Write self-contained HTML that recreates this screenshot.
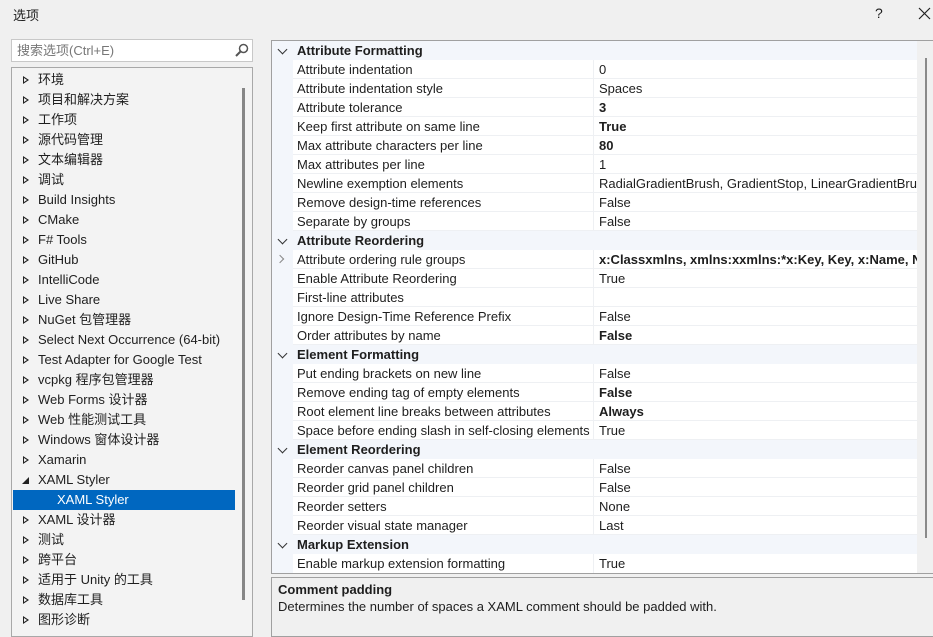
<!DOCTYPE html>
<html><head><meta charset="utf-8"><style>
*{margin:0;padding:0;box-sizing:border-box}
body{width:933px;height:626px;overflow:hidden;background:#f0f0f0;font-family:"Liberation Sans","Noto Sans CJK SC",sans-serif;font-size:13px;color:#1e1e1e;position:relative}
.abs{position:absolute}
.title{left:13px;top:5px;font-size:13px}
.search{left:11px;top:39px;width:242px;height:23px;border:1px solid #c8c8c8;background:#fff;color:#777;padding:2px 5px;line-height:17px}
.tree{left:11px;top:67px;width:242px;height:570px;border:1px solid #a8a8a8;background:#f3f3f3}
.ti{position:absolute;left:1px;width:222px;height:20px;line-height:20px;white-space:nowrap}
.ti .t{position:absolute;left:25px}
.ti .a{position:absolute;left:10px;top:6px;width:0;height:0;border-left:6px solid #222;border-top:4px solid transparent;border-bottom:4px solid transparent}
.ti .a::after{content:"";position:absolute;left:-5px;top:-2px;border-left:3px solid #f3f3f3;border-top:2px solid transparent;border-bottom:2px solid transparent}
.sel{background:#0067c0;color:#fff}
.grid{left:271px;top:40px;width:662px;height:534px;border:1px solid #a0a0a0;border-right:none;background:#fff;overflow:hidden}
.r{position:absolute;left:0;width:645px;height:19px;line-height:19px;white-space:nowrap}
.r.h{background:#f3f6fb;font-weight:bold}
.r .g{position:absolute;left:0;top:0;width:21px;height:19px;background:#f3f6fb}
.r .n{position:absolute;left:25px}
.r .v{position:absolute;left:321px;top:0;height:19px;border-left:1px solid #eef0f3;padding-left:5px;width:330px;overflow:hidden}
.r.d{border-bottom:1px solid #eef0f3}
.b{font-weight:bold}
.chev{position:absolute;left:7px;top:5px;width:7px;height:7px;border-right:1.5px solid #333;border-bottom:1.5px solid #333;transform:rotate(45deg)}
.chr{position:absolute;left:5px;top:6px;width:6px;height:6px;border-right:1.3px solid #888;border-top:1.3px solid #888;transform:rotate(45deg)}
.sb{left:917px;top:41px;width:16px;height:532px;background:#f0f0f0}
.desc{left:271px;top:577px;width:662px;height:60px;border:1px solid #a0a0a0;border-right:none;background:#f0f0f0;padding:4px 6px}
</style></head><body>
<div class="abs title">选项</div>
<div class="abs" style="left:875px;top:5px;font-size:14px">?</div>
<svg class="abs" style="left:918px;top:7px" width="13" height="13"><path d="M1 1L12 12M12 1L1 12" stroke="#222" stroke-width="1.2"/></svg>
<div class="abs search">搜索选项(Ctrl+E)<svg style="position:absolute;right:3px;top:3px" width="14" height="14"><circle cx="8.5" cy="5.5" r="4" fill="none" stroke="#555" stroke-width="1.5"/><path d="M5.5 8.5L1 13" stroke="#555" stroke-width="2"/></svg></div>
<div class="abs tree">
<div class="abs" style="left:230px;top:20px;width:3px;height:512px;background:#868686"></div>
<div class="ti" style="top:2px"><i class="a"></i><span class="t">环境</span></div>
<div class="ti" style="top:22px"><i class="a"></i><span class="t">项目和解决方案</span></div>
<div class="ti" style="top:42px"><i class="a"></i><span class="t">工作项</span></div>
<div class="ti" style="top:62px"><i class="a"></i><span class="t">源代码管理</span></div>
<div class="ti" style="top:82px"><i class="a"></i><span class="t">文本编辑器</span></div>
<div class="ti" style="top:102px"><i class="a"></i><span class="t">调试</span></div>
<div class="ti" style="top:122px"><i class="a"></i><span class="t">Build Insights</span></div>
<div class="ti" style="top:142px"><i class="a"></i><span class="t">CMake</span></div>
<div class="ti" style="top:162px"><i class="a"></i><span class="t">F# Tools</span></div>
<div class="ti" style="top:182px"><i class="a"></i><span class="t">GitHub</span></div>
<div class="ti" style="top:202px"><i class="a"></i><span class="t">IntelliCode</span></div>
<div class="ti" style="top:222px"><i class="a"></i><span class="t">Live Share</span></div>
<div class="ti" style="top:242px"><i class="a"></i><span class="t">NuGet 包管理器</span></div>
<div class="ti" style="top:262px"><i class="a"></i><span class="t">Select Next Occurrence (64-bit)</span></div>
<div class="ti" style="top:282px"><i class="a"></i><span class="t">Test Adapter for Google Test</span></div>
<div class="ti" style="top:302px"><i class="a"></i><span class="t">vcpkg 程序包管理器</span></div>
<div class="ti" style="top:322px"><i class="a"></i><span class="t">Web Forms 设计器</span></div>
<div class="ti" style="top:342px"><i class="a"></i><span class="t">Web 性能测试工具</span></div>
<div class="ti" style="top:362px"><i class="a"></i><span class="t">Windows 窗体设计器</span></div>
<div class="ti" style="top:382px"><i class="a"></i><span class="t">Xamarin</span></div>
<div class="ti" style="top:402px"><svg style="position:absolute;left:9px;top:7px" width="7" height="7"><path d="M7 0L7 7L0 7Z" fill="#222"/></svg><span class="t">XAML Styler</span></div>
<div class="ti sel" style="top:422px"><span class="t" style="left:44px">XAML Styler</span></div>
<div class="ti" style="top:442px"><i class="a"></i><span class="t">XAML 设计器</span></div>
<div class="ti" style="top:462px"><i class="a"></i><span class="t">测试</span></div>
<div class="ti" style="top:482px"><i class="a"></i><span class="t">跨平台</span></div>
<div class="ti" style="top:502px"><i class="a"></i><span class="t">适用于 Unity 的工具</span></div>
<div class="ti" style="top:522px"><i class="a"></i><span class="t">数据库工具</span></div>
<div class="ti" style="top:542px"><i class="a"></i><span class="t">图形诊断</span></div>
</div>
<div class="abs grid">
<div class="r h" style="top:0"><i class="chev"></i><span class="n">Attribute Formatting</span></div>
<div class="r d" style="top:19px"><i class="g"></i><span class="n">Attribute indentation</span><span class="v">0</span></div>
<div class="r d" style="top:38px"><i class="g"></i><span class="n">Attribute indentation style</span><span class="v">Spaces</span></div>
<div class="r d" style="top:57px"><i class="g"></i><span class="n">Attribute tolerance</span><span class="v b">3</span></div>
<div class="r d" style="top:76px"><i class="g"></i><span class="n">Keep first attribute on same line</span><span class="v b">True</span></div>
<div class="r d" style="top:95px"><i class="g"></i><span class="n">Max attribute characters per line</span><span class="v b">80</span></div>
<div class="r d" style="top:114px"><i class="g"></i><span class="n">Max attributes per line</span><span class="v">1</span></div>
<div class="r d" style="top:133px"><i class="g"></i><span class="n">Newline exemption elements</span><span class="v">RadialGradientBrush, GradientStop, LinearGradientBrush</span></div>
<div class="r d" style="top:152px"><i class="g"></i><span class="n">Remove design-time references</span><span class="v">False</span></div>
<div class="r d" style="top:171px"><i class="g"></i><span class="n">Separate by groups</span><span class="v">False</span></div>
<div class="r h" style="top:190px"><i class="chev"></i><span class="n">Attribute Reordering</span></div>
<div class="r d" style="top:209px"><i class="g"></i><i class="chr"></i><span class="n">Attribute ordering rule groups</span><span class="v b">x:Classxmlns, xmlns:xxmlns:*x:Key, Key, x:Name, Name</span></div>
<div class="r d" style="top:228px"><i class="g"></i><span class="n">Enable Attribute Reordering</span><span class="v">True</span></div>
<div class="r d" style="top:247px"><i class="g"></i><span class="n">First-line attributes</span><span class="v"></span></div>
<div class="r d" style="top:266px"><i class="g"></i><span class="n">Ignore Design-Time Reference Prefix</span><span class="v">False</span></div>
<div class="r d" style="top:285px"><i class="g"></i><span class="n">Order attributes by name</span><span class="v b">False</span></div>
<div class="r h" style="top:304px"><i class="chev"></i><span class="n">Element Formatting</span></div>
<div class="r d" style="top:323px"><i class="g"></i><span class="n">Put ending brackets on new line</span><span class="v">False</span></div>
<div class="r d" style="top:342px"><i class="g"></i><span class="n">Remove ending tag of empty elements</span><span class="v b">False</span></div>
<div class="r d" style="top:361px"><i class="g"></i><span class="n">Root element line breaks between attributes</span><span class="v b">Always</span></div>
<div class="r d" style="top:380px"><i class="g"></i><span class="n">Space before ending slash in self-closing elements</span><span class="v">True</span></div>
<div class="r h" style="top:399px"><i class="chev"></i><span class="n">Element Reordering</span></div>
<div class="r d" style="top:418px"><i class="g"></i><span class="n">Reorder canvas panel children</span><span class="v">False</span></div>
<div class="r d" style="top:437px"><i class="g"></i><span class="n">Reorder grid panel children</span><span class="v">False</span></div>
<div class="r d" style="top:456px"><i class="g"></i><span class="n">Reorder setters</span><span class="v">None</span></div>
<div class="r d" style="top:475px"><i class="g"></i><span class="n">Reorder visual state manager</span><span class="v">Last</span></div>
<div class="r h" style="top:494px"><i class="chev"></i><span class="n">Markup Extension</span></div>
<div class="r" style="top:513px"><i class="g"></i><span class="n">Enable markup extension formatting</span><span class="v">True</span></div>
</div>
<div class="abs sb"><div class="abs" style="left:8px;top:17px;width:2px;height:480px;background:#8a8a8a"></div></div>
<div class="abs desc"><div class="b">Comment padding</div><div style="margin-top:2px">Determines the number of spaces a XAML comment should be padded with.</div></div>
</body></html>
